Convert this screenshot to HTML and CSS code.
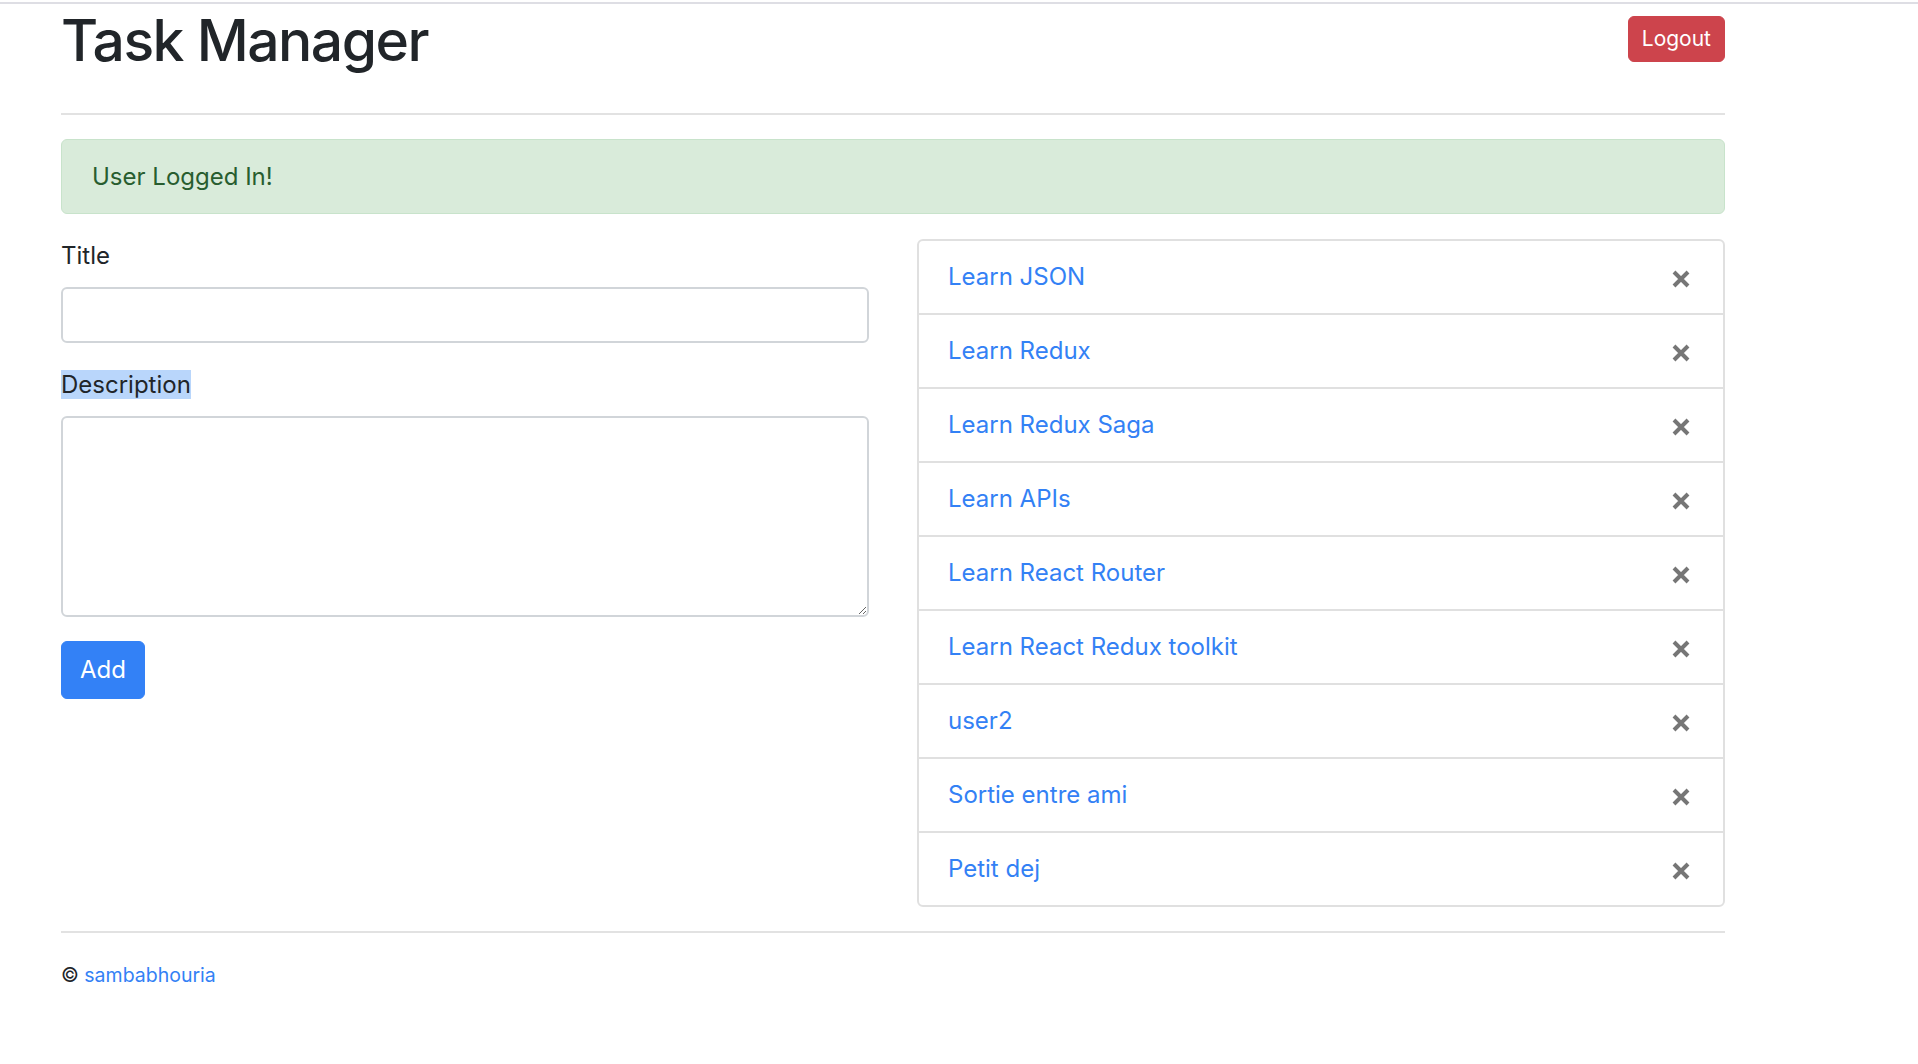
FILE: index.html
```html
<!DOCTYPE html>
<html lang="en">
<head>
<meta charset="utf-8">
<title>Task Manager</title>
<link rel="stylesheet" href="styles.css">
</head>
<body>
<div class="chrome-line"></div>
<div class="container">
  <header class="header">
    <h1 class="title">Task Manager</h1>
    <button class="btn btn-danger btn-sm">Logout</button>
  </header>
  <hr class="rule">
  <div class="alert">User Logged In!</div>
  <div class="row">
    <form class="task-form">
      <div class="form-group">
        <label class="label" for="title">Title</label>
        <input class="form-control" id="title" type="text">
      </div>
      <div class="form-group">
        <label class="label" for="desc"><span class="selected">Description</span></label>
        <textarea class="form-control textarea" id="desc" rows="5"></textarea>
      </div>
      <button type="button" class="btn btn-primary">Add</button>
    </form>
    <ul class="list-group">
      <li class="list-item"><a class="task-link" href="#">Learn JSON</a><span class="close"><svg viewBox="0 0 18 18" width="18" height="18"><path d="M2 2L16 16M16 2L2 16" /></svg></span></li>
      <li class="list-item"><a class="task-link" href="#">Learn Redux</a><span class="close"><svg viewBox="0 0 18 18" width="18" height="18"><path d="M2 2L16 16M16 2L2 16" /></svg></span></li>
      <li class="list-item"><a class="task-link" href="#">Learn Redux Saga</a><span class="close"><svg viewBox="0 0 18 18" width="18" height="18"><path d="M2 2L16 16M16 2L2 16" /></svg></span></li>
      <li class="list-item"><a class="task-link" href="#">Learn APIs</a><span class="close"><svg viewBox="0 0 18 18" width="18" height="18"><path d="M2 2L16 16M16 2L2 16" /></svg></span></li>
      <li class="list-item"><a class="task-link" href="#">Learn React Router</a><span class="close"><svg viewBox="0 0 18 18" width="18" height="18"><path d="M2 2L16 16M16 2L2 16" /></svg></span></li>
      <li class="list-item"><a class="task-link" href="#">Learn React Redux toolkit</a><span class="close"><svg viewBox="0 0 18 18" width="18" height="18"><path d="M2 2L16 16M16 2L2 16" /></svg></span></li>
      <li class="list-item"><a class="task-link" href="#">user2</a><span class="close"><svg viewBox="0 0 18 18" width="18" height="18"><path d="M2 2L16 16M16 2L2 16" /></svg></span></li>
      <li class="list-item"><a class="task-link" href="#">Sortie entre ami</a><span class="close"><svg viewBox="0 0 18 18" width="18" height="18"><path d="M2 2L16 16M16 2L2 16" /></svg></span></li>
      <li class="list-item"><a class="task-link" href="#">Petit dej</a><span class="close"><svg viewBox="0 0 18 18" width="18" height="18"><path d="M2 2L16 16M16 2L2 16" /></svg></span></li>
    </ul>
  </div>
  <hr class="rule">
  <footer class="footer">© <a class="footer-link" href="#">sambabhouria</a></footer>
</div>
</body>
</html>
```

FILE: styles.css
```css
* { box-sizing: border-box; }

html, body {
  margin: 0;
  padding: 0;
  background: #ffffff;
}

body {
  font-family: Inter, "Liberation Sans", sans-serif;
  font-size: 24px;
  line-height: 1.5;
  color: #212529;
}

.chrome-line {
  height: 2px;
  margin-top: 2px;
  background: #dedee4;
}

.container {
  width: 1725px;
  padding-left: 61px;
}

.header {
  display: flex;
  justify-content: space-between;
  align-items: flex-start;
}

.title {
  margin: 3px 0 14px;
  font-size: 57px;
  font-weight: 500;
  line-height: 1.2;
  letter-spacing: -1.5px;
  color: #212529;
}

.btn {
  display: inline-block;
  font-family: inherit;
  border: 1px solid transparent;
  border-radius: 6px;
  color: #ffffff;
  cursor: pointer;
}

.btn-sm {
  margin-top: 12px;
  height: 46px;
  padding: 0 13px;
  font-size: 21px;
  line-height: 44px;
}

.btn-danger {
  background: #cd444c;
  border-color: #cd444c;
}

.btn-primary {
  height: 58px;
  padding: 0 18px;
  font-size: 24px;
  line-height: 56px;
  background: #3381f6;
  border-color: #3381f6;
}

.rule {
  margin: 24px 0;
  border: 0;
  height: 2px;
  background: #e2e2e2;
}

.alert {
  height: 75px;
  padding: 18px 30px;
  margin-bottom: 24px;
  border: 1px solid #c8e3cb;
  border-radius: 6px;
  background: #d9ebda;
  color: #285d2f;
  line-height: 37px;
}

.row {
  display: grid;
  grid-template-columns: 808px 808px;
  column-gap: 48px;
  align-items: start;
}

.task-form {
  margin: 0;
}

.form-group {
  margin-bottom: 24px;
}

.label {
  display: block;
  margin-bottom: 13px;
  line-height: 36px;
}

.selected {
  background: #b9d6fb;
}

.form-control {
  display: block;
  width: 100%;
  height: 56px;
  padding: 9px 18px;
  font-family: inherit;
  font-size: 24px;
  line-height: 36px;
  color: #495057;
  background: #ffffff;
  border: 2px solid #d1d5d9;
  border-radius: 6px;
  outline: none;
}

.textarea {
  height: 201px;
  resize: vertical;
}

.list-group {
  list-style: none;
  margin: 1px 0 0;
  padding: 0;
  border: 2px solid #e0e0e0;
  border-radius: 6px;
}

.list-item {
  display: flex;
  justify-content: space-between;
  align-items: center;
  height: 74px;
  padding: 0 33px 0 29px;
  border-bottom: 2px solid #e0e0e0;
}

.list-item:last-child {
  border-bottom: 0;
  height: 72px;
}

.task-link {
  color: #3381f5;
  text-decoration: none;
  line-height: 36px;
}

.close {
  display: flex;
  width: 18px;
  height: 18px;
  margin-top: 4px;
}

.close svg {
  stroke: #767676;
  stroke-width: 4;
  stroke-linecap: butt;
  fill: none;
}

.footer {
  font-size: 19.5px;
  line-height: 30px;
  margin-top: 27px;
  color: #212529;
}

.footer-link {
  color: #3381f5;
  text-decoration: none;
}
```
